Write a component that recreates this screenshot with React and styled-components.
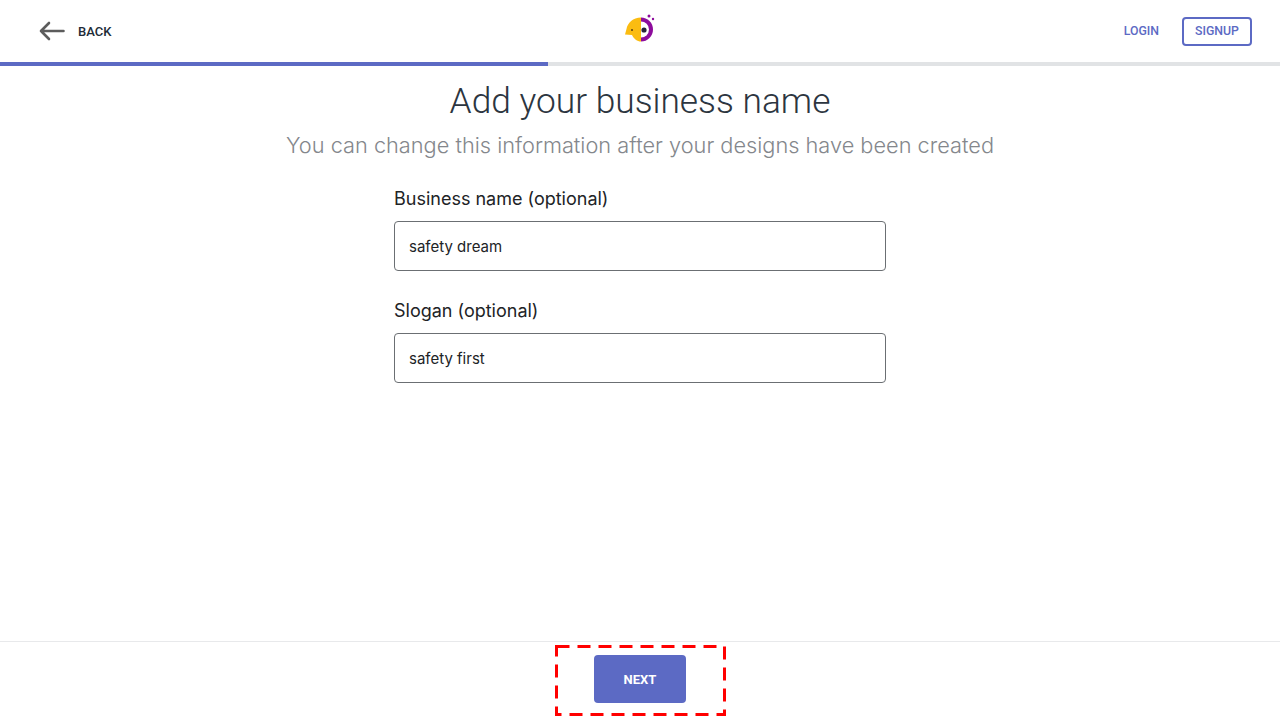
import React from "react";
import styled, { createGlobalStyle } from "styled-components";

const GlobalStyle = createGlobalStyle`
    html, body {
        margin: 0;
        padding: 0;
        height: 100%;
        background: #fff;
    }
    #root {
        height: 100%;
    }
    * {
        box-sizing: border-box;
    }
`;

const Logo = () => (
    <svg width="32" height="32" viewBox="0 0 32 32">
        <path d="M17 3.5C9 3.5 3.5 9 2.5 15L1 20.5L8 21C10 25 13 27.5 17 27.5Z" fill="#fbbc11" />
        <circle cx="8" cy="16" r="1" fill="#5a3d10" />
        <path d="M17 3.5A12 12 0 0 1 17 27.5Z" fill="#8d0c9c" />
        <path d="M17 7.5A8 8 0 0 1 17 23.5Z" fill="#fff" />
        <circle cx="20" cy="16" r="2.6" fill="#27233a" />
        <circle cx="25" cy="2" r="1.5" fill="#8d0c9c" />
        <circle cx="29" cy="5" r="1.2" fill="#8d0c9c" />
    </svg>
);

const App = () => {
    return (
        <Page>
            <GlobalStyle />
            <Header>
                <BackLink>
                    <svg width="26" height="20" viewBox="0 0 26 20" fill="none" stroke="#5c5c5c" strokeWidth="2.6" strokeLinecap="round" strokeLinejoin="round">
                        <path d="M24.5 10H2M10 2L2 10L10 18" />
                    </svg>
                    <BackText>BACK</BackText>
                </BackLink>
                <LogoSlot>
                    <Logo />
                </LogoSlot>
                <Actions>
                    <LoginLink>LOGIN</LoginLink>
                    <SignupButton>SIGNUP</SignupButton>
                </Actions>
            </Header>
            <Progress>
                <ProgressFill $percent={42.8} />
            </Progress>
            <Main>
                <Title>Add your business name</Title>
                <Subtitle>You can change this information after your designs have been created</Subtitle>
                <Form>
                    <Field>
                        <Label>Business name (optional)</Label>
                        <Input defaultValue="safety dream" />
                    </Field>
                    <Field>
                        <Label>Slogan (optional)</Label>
                        <Input defaultValue="safety first" />
                    </Field>
                </Form>
            </Main>
            <Footer>
                <Highlight>
                    <svg width="171" height="72" viewBox="0 0 171 72" fill="none">
                        <rect x="1.5" y="1.5" width="168" height="68" stroke="#ff0000" strokeWidth="3" strokeDasharray="13 8" />
                    </svg>
                </Highlight>
                <NextButton>NEXT</NextButton>
            </Footer>
        </Page>
    );
};

export default App;

const Page = styled.div`
    height: 717px;
    display: flex;
    flex-direction: column;
    font-family: Inter, "Liberation Sans", sans-serif;
    color: #212326;
`;

const Header = styled.header`
    height: 62px;
    flex: none;
    padding: 0 28px 0 39px;
    display: flex;
    align-items: center;
    justify-content: space-between;
    position: relative;
`;

const BackLink = styled.a`
    display: flex;
    align-items: center;
    gap: 13px;
`;

const BackText = styled.span`
    font-family: Roboto, sans-serif;
    font-size: 13px;
    font-weight: 500;
    color: #212b36;
`;

const LogoSlot = styled.div`
    position: absolute;
    left: 624px;
    top: 14px;
    line-height: 0;
`;

const Actions = styled.div`
    display: flex;
    align-items: center;
    gap: 23px;
`;

const LoginLink = styled.a`
    font-family: Roboto, sans-serif;
    font-size: 12.3px;
    font-weight: 500;
    color: #5c6ac4;
`;

const SignupButton = styled.button`
    width: 70px;
    height: 29px;
    padding: 0;
    background: #fff;
    border: 2px solid #5c6ac4;
    border-radius: 4px;
    font-family: Roboto, sans-serif;
    font-size: 12.3px;
    font-weight: 500;
    color: #5c6ac4;
`;

const Progress = styled.div`
    height: 4px;
    flex: none;
    background: #e1e3e5;
`;

const ProgressFill = styled.div`
    height: 100%;
    width: ${(props) => props.$percent}%;
    background: #5c6ac4;
`;

const Main = styled.main`
    flex: 1;
    display: flex;
    flex-direction: column;
    align-items: center;
`;

const Title = styled.h1`
    margin: 10px 0 0;
    font-family: Roboto, sans-serif;
    font-size: 35.3px;
    line-height: 50px;
    font-weight: 300;
    color: #2c3540;
`;

const Subtitle = styled.p`
    margin: 4px 0 0;
    font-size: 21.75px;
    line-height: 30px;
    font-weight: 300;
    color: #84878c;
`;

const Form = styled.div`
    width: 492px;
    margin-top: 26px;
    display: flex;
    flex-direction: column;
    gap: 27px;
`;

const Field = styled.div`
    display: flex;
    flex-direction: column;
    gap: 9px;
`;

const Label = styled.label`
    font-size: 18px;
    line-height: 26px;
    font-weight: 400;
    color: #212326;
`;

const Input = styled.input`
    height: 50px;
    padding: 0 14px;
    border: 1px solid #6b6f73;
    border-radius: 4px;
    outline: none;
    font-family: Inter, sans-serif;
    font-size: 15px;
    color: #212326;
`;

const Footer = styled.footer`
    height: 76px;
    flex: none;
    border-top: 1px solid #e8e9eb;
    display: flex;
    justify-content: center;
    padding-top: 13px;
    position: relative;
`;

const NextButton = styled.button`
    width: 92px;
    height: 48px;
    padding: 1px 0 0;
    background: #5c6ac4;
    border: none;
    border-radius: 4px;
    font-family: Roboto, sans-serif;
    font-size: 13px;
    font-weight: 700;
    color: #fff;
`;

const Highlight = styled.div`
    position: absolute;
    left: 555px;
    top: 3px;
    line-height: 0;
`;
